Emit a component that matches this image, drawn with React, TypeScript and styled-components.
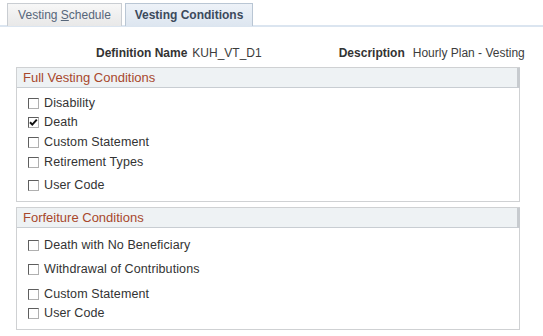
import React from "react";
import styled, { createGlobalStyle } from "styled-components";

const Global = createGlobalStyle`
  html, body { margin: 0; padding: 0; background: #ffffff; }
  body { font-family: "Liberation Sans", Arial, sans-serif; font-size: 12px; color: #333333; }
`;

const Page = styled.div`
  width: 543px;
  height: 336px;
  overflow: hidden;
`;

const TabBar = styled.div`
  display: flex;
  align-items: flex-end;
  gap: 3px;
  padding: 3px 0 0 7px;
  border-bottom: 2px solid #dbe5f0;
  height: 22px;
`;

const Tab = styled.div<{ $active?: boolean }>`
  box-sizing: border-box;
  height: 23px;
  width: ${(p) => (p.$active ? "128px" : "115px")};
  display: flex;
  align-items: center;
  justify-content: center;
  border: 1px solid ${(p) => (p.$active ? "#b9c6d4" : "#c9cdd2")};
  border-bottom: none;
  background: ${(p) =>
    p.$active
      ? "linear-gradient(#edf2f8, #dde6f0)"
      : "linear-gradient(#f7f7f7, #e8e8e8)"};
  color: ${(p) => (p.$active ? "#3c4a5c" : "#56667a")};
  font-weight: ${(p) => (p.$active ? "bold" : "normal")};
  font-size: 12px;
  margin-bottom: -1px;
  u { text-decoration: underline; text-underline-offset: 1px; }
`;

const InfoRow = styled.div`
  display: flex;
  align-items: center;
  height: 14px;
  margin-top: 19px;
  padding-left: 96px;
`;

const InfoLabel = styled.span<{ $ml?: number }>`
  font-weight: bold;
  color: #333333;
  margin-left: ${(p) => p.$ml ?? 0}px;
`;

const InfoValue = styled.span<{ $ml?: number }>`
  color: #3c3c3c;
  margin-left: ${(p) => p.$ml ?? 0}px;
`;

const Sections = styled.div`
  display: flex;
  flex-direction: column;
  gap: 5px;
  margin: 7px 0 0 16px;
  width: 504px;
`;

const Section = styled.div`
  box-sizing: border-box;
  border: 1px solid #cfd1d3;
`;

const SectionHeader = styled.div`
  box-sizing: border-box;
  height: 20px;
  background: #eef2f4;
  border-bottom: 1px solid #c8cdd2;
  border-right: 3px solid #c7cbcf;
  margin-right: -1px;
  padding-left: 6px;
  display: flex;
  align-items: center;
  color: #a8482c;
  font-size: 13px;
`;

const SectionBody = styled.div<{ $pt: number; $pb: number }>`
  display: flex;
  flex-direction: column;
  padding: ${(p) => p.$pt}px 0 ${(p) => p.$pb}px 11px;
`;

const Row = styled.label<{ $mt?: number }>`
  display: flex;
  align-items: center;
  height: 18px;
  margin-top: ${(p) => p.$mt ?? 0}px;
  gap: 5px;
  color: #333333;
  font-size: 12.5px;
  letter-spacing: 0.1px;
`;

const Box = styled.span`
  box-sizing: border-box;
  width: 11px;
  height: 11px;
  border-top: 1px solid #5e5e5e;
  border-left: 1px solid #5e5e5e;
  border-right: 1px solid #b0b0b0;
  border-bottom: 1px solid #b0b0b0;
  background: #ffffff;
  display: flex;
  align-items: center;
  justify-content: center;
`;

function Check({ label, checked, mt }: { label: string; checked?: boolean; mt?: number }) {
  return (
    <Row $mt={mt}>
      <Box>
        {checked && (
          <svg width="9" height="9" viewBox="0 0 9 9">
            <path d="M1 4.2 L3.3 6.6 L7.8 1.6" fill="none" stroke="#111" strokeWidth="2" />
          </svg>
        )}
      </Box>
      <span>{label}</span>
    </Row>
  );
}

export default function App() {
  return (
    <Page>
      <Global />
      <TabBar>
        <Tab>
          Vesting&nbsp;<u>S</u>chedule
        </Tab>
        <Tab $active>Vesting Conditions</Tab>
      </TabBar>
      <InfoRow>
        <InfoLabel>Definition Name</InfoLabel>
        <InfoValue $ml={5}>KUH_VT_D1</InfoValue>
        <InfoLabel $ml={77}>Description</InfoLabel>
        <InfoValue $ml={8}>Hourly Plan - Vesting</InfoValue>
      </InfoRow>
      <Sections>
        <Section>
          <SectionHeader>Full Vesting Conditions</SectionHeader>
          <SectionBody $pt={6} $pb={7}>
            <Check label="Disability" />
            <Check label="Death" checked mt={1} />
            <Check label="Custom Statement" mt={2} />
            <Check label="Retirement Types" mt={2} />
            <Check label="User Code" mt={5} />
          </SectionBody>
        </Section>
        <Section>
          <SectionHeader>Forfeiture Conditions</SectionHeader>
          <SectionBody $pt={8} $pb={7}>
            <Check label="Death with No Beneficiary" />
            <Check label="Withdrawal of Contributions" mt={6} />
            <Check label="Custom Statement" mt={7} />
            <Check label="User Code" mt={1} />
          </SectionBody>
        </Section>
      </Sections>
    </Page>
  );
}
